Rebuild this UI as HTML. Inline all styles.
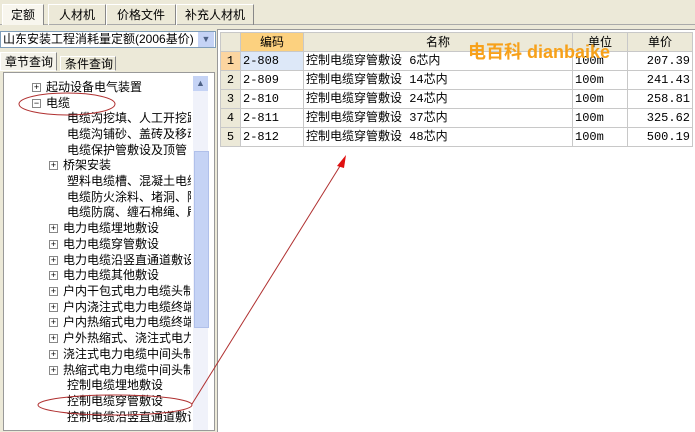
<!DOCTYPE html><html><head><meta charset="utf-8"><style>
body{margin:0;width:695px;height:431px;background:#ece9d8;font-family:"Liberation Sans","Noto Sans CJK SC",sans-serif;font-size:12px;position:relative;overflow:hidden}
.a{position:absolute}
.tab{position:absolute;top:4px;height:20px;line-height:20px;text-align:center;border:1px solid #fff;border-right-color:#888;border-bottom:none;font-size:12px}
.tr{position:absolute;left:0;white-space:nowrap;font-size:12px;line-height:15px}
.pm{display:inline-block;width:7px;height:7px;border:1px solid #888;background:#fff;position:relative;vertical-align:middle;margin-right:5px;font-size:9px;line-height:7px;text-align:center}
table{border-collapse:collapse;font-size:12px}
td{border:1px solid #c8c8c8;height:18px;padding:0 2px;white-space:nowrap;vertical-align:middle;line-height:18px;font-family:"Liberation Mono","Noto Sans CJK SC",monospace}
</style></head><body>
<div class="a" style="left:0;top:24px;width:695px;height:1px;background:#aaa"></div>
<div class="tab" style="left:2px;width:40px;background:#f8f6ee">定额</div>
<div class="tab" style="left:48px;width:56px">人材机</div>
<div class="tab" style="left:106px;width:68px">价格文件</div>
<div class="tab" style="left:176px;width:76px">补充人材机</div>
<div class="a" style="left:0;top:31px;width:216px;height:17px;background:#fff;border:1px solid #7f9db9;box-sizing:border-box;line-height:15px;font-size:12px;padding-left:2px">山东安装工程消耗量定额(2006基价)</div>
<div class="a" style="left:198px;top:32px;width:16px;height:15px;background:#c5d3f5;color:#4d6185;font-size:9px;text-align:center;line-height:15px">▼</div>
<div class="a" style="left:0;top:52px;width:57px;height:19px;background:#f4f2ea;border:1px solid #fff;border-right-color:#888;line-height:18px;padding-left:4px;box-sizing:border-box">章节查询</div>
<div class="a" style="left:60px;top:56px;width:56px;height:15px;border:1px solid #fff;border-right-color:#888;line-height:15px;padding-left:4px;box-sizing:border-box">条件查询</div>
<div class="a" style="left:3px;top:72px;width:212px;height:359px;background:#fff;border:1px solid #999;box-sizing:border-box;overflow:hidden">
<div class="a" style="left:189px;top:3px;width:15px;height:356px;background:#f0f2fa"></div>
<div class="a" style="left:189px;top:3px;width:15px;height:15px;background:#c5d3f5;color:#4d6185;font-size:9px;text-align:center;line-height:15px">▲</div>
<div class="a" style="left:190px;top:78px;width:13px;height:175px;background:#c5d3f5;border:1px solid #b0c0ea"></div>
<div style="position:absolute;left:0;top:0;width:187px;height:359px;overflow:hidden">
<div class="tr" style="left:28px;top:7px"><span class="pm">+</span>起动设备电气装置</div>
<div class="tr" style="left:28px;top:23px"><span class="pm">−</span>电缆</div>
<div class="tr" style="left:63px;top:38px">电缆沟挖填、人工开挖路面</div>
<div class="tr" style="left:63px;top:54px">电缆沟铺砂、盖砖及移动盖板</div>
<div class="tr" style="left:63px;top:70px">电缆保护管敷设及顶管</div>
<div class="tr" style="left:45px;top:85px"><span class="pm">+</span>桥架安装</div>
<div class="tr" style="left:63px;top:101px">塑料电缆槽、混凝土电缆槽</div>
<div class="tr" style="left:63px;top:117px">电缆防火涂料、堵洞、隔板</div>
<div class="tr" style="left:63px;top:132px">电缆防腐、缠石棉绳、刷漆</div>
<div class="tr" style="left:45px;top:148px"><span class="pm">+</span>电力电缆埋地敷设</div>
<div class="tr" style="left:45px;top:164px"><span class="pm">+</span>电力电缆穿管敷设</div>
<div class="tr" style="left:45px;top:180px"><span class="pm">+</span>电力电缆沿竖直通道敷设</div>
<div class="tr" style="left:45px;top:195px"><span class="pm">+</span>电力电缆其他敷设</div>
<div class="tr" style="left:45px;top:211px"><span class="pm">+</span>户内干包式电力电缆头制作</div>
<div class="tr" style="left:45px;top:227px"><span class="pm">+</span>户内浇注式电力电缆终端头</div>
<div class="tr" style="left:45px;top:242px"><span class="pm">+</span>户内热缩式电力电缆终端头</div>
<div class="tr" style="left:45px;top:258px"><span class="pm">+</span>户外热缩式、浇注式电力</div>
<div class="tr" style="left:45px;top:274px"><span class="pm">+</span>浇注式电力电缆中间头制作</div>
<div class="tr" style="left:45px;top:290px"><span class="pm">+</span>热缩式电力电缆中间头制作</div>
<div class="tr" style="left:63px;top:305px">控制电缆埋地敷设</div>
<div class="tr" style="left:63px;top:321px">控制电缆穿管敷设</div>
<div class="tr" style="left:63px;top:337px">控制电缆沿竖直通道敷设</div>
</div></div>
<div class="a" style="left:217px;top:29px;width:478px;height:402px;background:#fff;border-left:1px solid #999;border-top:1px solid #999"></div>
<table class="a" style="left:220px;top:32px">
<tr style="background:#ece9d8"><td style="width:15px;height:17px;line-height:17px"></td><td style="width:58px;background:#fcd17f;text-align:center;font-family:'Liberation Sans','Noto Sans CJK SC',sans-serif">编码</td><td style="width:264px;text-align:center;font-family:'Liberation Sans','Noto Sans CJK SC',sans-serif">名称</td><td style="width:50px;text-align:center;font-family:'Liberation Sans','Noto Sans CJK SC',sans-serif">单位</td><td style="width:60px;text-align:center;font-family:'Liberation Sans','Noto Sans CJK SC',sans-serif">单价</td></tr>
<tr><td style="background:#fcd5a0;text-align:center">1</td><td style="background:#dde8f8">2-808</td><td>控制电缆穿管敷设 6芯内</td><td>100m</td><td style="text-align:right">207.39</td></tr>
<tr><td style="background:#ece9d8;text-align:center">2</td><td>2-809</td><td>控制电缆穿管敷设 14芯内</td><td>100m</td><td style="text-align:right">241.43</td></tr>
<tr><td style="background:#ece9d8;text-align:center">3</td><td>2-810</td><td>控制电缆穿管敷设 24芯内</td><td>100m</td><td style="text-align:right">258.81</td></tr>
<tr><td style="background:#ece9d8;text-align:center">4</td><td>2-811</td><td>控制电缆穿管敷设 37芯内</td><td>100m</td><td style="text-align:right">325.62</td></tr>
<tr><td style="background:#ece9d8;text-align:center">5</td><td>2-812</td><td>控制电缆穿管敷设 48芯内</td><td>100m</td><td style="text-align:right">500.19</td></tr>
</table>
<div class="a" style="left:468px;top:38px;color:#f7a11a;font-weight:bold;font-size:18px;white-space:nowrap">电百科 dianbaike</div>
<svg class="a" style="left:0;top:0" width="695" height="431">
<ellipse cx="67" cy="104" rx="48" ry="11" fill="none" stroke="#b03030"/>
<ellipse cx="115" cy="405" rx="77" ry="10" fill="none" stroke="#b03030"/>
<line x1="192" y1="404" x2="345" y2="158" stroke="#b03030"/>
<polygon points="346,155 337,166 344,168" fill="#e01010"/>
</svg>
</body></html>
